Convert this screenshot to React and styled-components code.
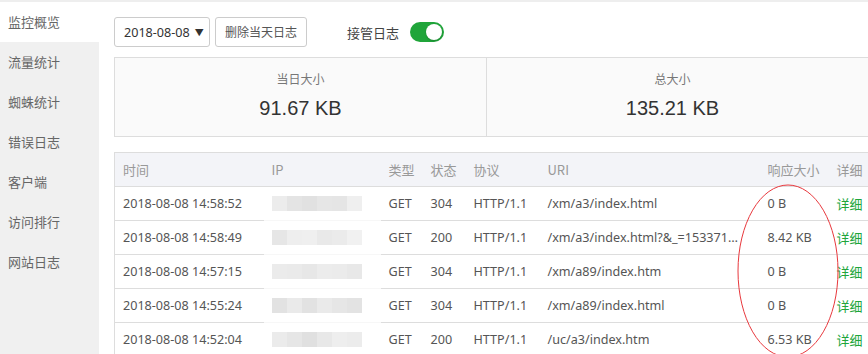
import React from 'react';
import styled, { createGlobalStyle } from 'styled-components';

const GlobalStyle = createGlobalStyle`
  html, body {
    margin: 0;
    padding: 0;
    background: #fff;
    overflow: hidden;
  }
  body {
    font-family: "Noto Sans", "Noto Sans CJK SC", sans-serif;
    color: #333;
  }
`;

const Page = styled.div`
  position: relative;
  display: flex;
  width: 868px;
  height: 354px;
  border-top: 2px solid #eeeeee;
  box-sizing: border-box;
  overflow: hidden;
`;

const Sidebar = styled.ul`
  list-style: none;
  margin: 0;
  padding: 0;
  width: 99px;
  flex-shrink: 0;
  background: #f0f0f0;
`;

const NavItem = styled.li`
  height: 40px;
  line-height: 40px;
  padding-left: 8px;
  font-size: 13px;
  color: #666;
  background: ${p => (p.active ? '#fff' : 'transparent')};
  font-family: "Noto Sans CJK SC", sans-serif;
`;

const Main = styled.div`
  flex: 1;
  min-width: 0;
  padding: 15px 0 0 15px;
`;

const Toolbar = styled.div`
  display: flex;
  align-items: center;
  height: 30px;
`;

const Select = styled.div`
  display: flex;
  align-items: center;
  box-sizing: border-box;
  width: 96px;
  height: 30px;
  padding: 0 0 0 9px;
  border: 1px solid #ccc;
  border-radius: 3px;
  font-size: 12.6px;
  color: #333;
  gap: 5px;

  span {
    font-size: 9px;
  }
`;

const Button = styled.div`
  box-sizing: border-box;
  height: 30px;
  margin-left: 5px;
  padding: 0 9px;
  line-height: 28px;
  border: 1px solid #ccc;
  border-radius: 3px;
  font-size: 12px;
  color: #555;
  font-family: "Noto Sans CJK SC", sans-serif;
`;

const SwitchLabel = styled.span`
  margin-left: 40px;
  font-size: 13px;
  color: #444;
  font-family: "Noto Sans CJK SC", sans-serif;
`;

const Switch = styled.div`
  position: relative;
  width: 34px;
  height: 20px;
  margin-left: 11px;
  border-radius: 10px;
  background: ${p => (p.on ? '#20a53a' : '#ccc')};

  &::after {
    content: '';
    position: absolute;
    top: 2px;
    left: ${p => (p.on ? '16px' : '2px')};
    width: 16px;
    height: 16px;
    border-radius: 50%;
    background: #fff;
    box-shadow: 0 1px 2px rgba(0, 0, 0, 0.2);
  }
`;

const Stats = styled.div`
  display: grid;
  grid-template-columns: 371px 1fr;
  margin-top: 10px;
  height: 80px;
  box-sizing: border-box;
  border: 1px solid #ddd;
  border-right: none;
  background: #fafafa;
`;

const StatCell = styled.div`
  display: flex;
  flex-direction: column;
  align-items: center;
  padding-top: 13px;
  padding-right: ${p => p.shift || 0}px;
  border-left: ${p => (p.divided ? '1px solid #ddd' : 'none')};
`;

const StatLabel = styled.div`
  font-size: 12px;
  color: #777;
  font-family: "Noto Sans CJK SC", sans-serif;
  line-height: 16px;
`;

const StatValue = styled.div`
  margin-top: 9px;
  font-size: 20px;
  color: #333;
  font-family: "Liberation Sans", Arial, sans-serif;
  line-height: 24px;
`;

const Table = styled.table`
  margin-top: 15px;
  width: 780px;
  border-collapse: collapse;
  table-layout: fixed;
  border-left: 1px solid #ddd;
  font-size: 12.6px;
`;

const Th = styled.th`
  height: 33px;
  padding: 0 8px;
  text-align: left;
  font-weight: normal;
  font-size: 13px;
  color: #999;
  background: #f3f4f8;
  border-top: 1px solid #ddd;
  border-bottom: 1px solid #ddd;
  font-family: "Noto Sans CJK SC", sans-serif;
  white-space: nowrap;
`;

const Td = styled.td`
  height: 33px;
  padding: 0 ${p => (p.tight ? 18 : 8)}px 0 8px;
  color: ${p => (p.link ? '#20a53a' : '#555')};
  border-bottom: 1px solid ${p => (p.masked ? '#f7f7f7' : '#ddd')};
  white-space: nowrap;
  overflow: hidden;
  text-overflow: ellipsis;
  font-family: ${p => (p.link ? '"Noto Sans CJK SC", sans-serif' : '"Noto Sans", sans-serif')};
  font-size: ${p => (p.link ? '13px' : 'inherit')};
`;

const Mosaic = styled.div`
  display: flex;
  width: 90px;
  height: 15px;
`;

const Tile = styled.div`
  flex: 1;
  background: ${p => p.shade};
`;

const Circle = styled.svg`
  position: absolute;
  left: 0;
  top: 0;
  pointer-events: none;
`;

const navItems = ['监控概览', '流量统计', '蜘蛛统计', '错误日志', '客户端', '访问排行', '网站日志'];

const rows = [
  { time: '2018-08-08 14:58:52', code: '304', uri: '/xm/a3/index.html', size: '0 B',
    tiles: ['#ececec', '#e4e4e4', '#e1e1e1', '#e6e6e6', '#e5e5e5', '#efefef'] },
  { time: '2018-08-08 14:58:49', code: '200', uri: '/xm/a3/index.html?&_=1533713620123', size: '8.42 KB',
    tiles: ['#e6e6e6', '#eeeeee', '#efefef', '#e9e9e9', '#ebebeb', '#f1f1f1'] },
  { time: '2018-08-08 14:57:15', code: '304', uri: '/xm/a89/index.htm', size: '0 B',
    tiles: ['#ebebeb', '#eaeaea', '#e7e7e7', '#ececec', '#ebebeb', '#e8e8e8'] },
  { time: '2018-08-08 14:55:24', code: '304', uri: '/xm/a89/index.html', size: '0 B',
    tiles: ['#e2e2e2', '#eaeaea', '#e2e2e2', '#eaeaea', '#e6e6e6', '#e3e3e3'] },
  { time: '2018-08-08 14:52:04', code: '200', uri: '/uc/a3/index.htm', size: '6.53 KB',
    tiles: ['#ebebeb', '#e6e6e6', '#e0e0e0', '#e8e8e8', '#eeeeee', '#ececec'] },
];

const App = () => {
  return (
    <>
      <GlobalStyle />
      <Page>
        <Sidebar>
          {navItems.map((n, i) => (
            <NavItem key={n} active={i === 0}>{n}</NavItem>
          ))}
        </Sidebar>
        <Main>
          <Toolbar>
            <Select>2018-08-08 <span>▼</span></Select>
            <Button>删除当天日志</Button>
            <SwitchLabel>接管日志</SwitchLabel>
            <Switch on />
          </Toolbar>
          <Stats>
            <StatCell>
              <StatLabel>当日大小</StatLabel>
              <StatValue>91.67 KB</StatValue>
            </StatCell>
            <StatCell divided shift={10}>
              <StatLabel>总大小</StatLabel>
              <StatValue>135.21 KB</StatValue>
            </StatCell>
          </Stats>
          <Table>
            <colgroup>
              <col style={{ width: 149 }} />
              <col style={{ width: 117 }} />
              <col style={{ width: 42 }} />
              <col style={{ width: 43 }} />
              <col style={{ width: 74 }} />
              <col style={{ width: 220 }} />
              <col style={{ width: 69 }} />
              <col style={{ width: 66 }} />
            </colgroup>
            <thead>
              <tr>
                <Th>时间</Th>
                <Th>IP</Th>
                <Th>类型</Th>
                <Th>状态</Th>
                <Th>协议</Th>
                <Th>URI</Th>
                <Th>响应大小</Th>
                <Th>详细</Th>
              </tr>
            </thead>
            <tbody>
              {rows.map(r => (
                <tr key={r.time}>
                  <Td>{r.time}</Td>
                  <Td masked>
                    <Mosaic>
                      {r.tiles.map((t, i) => <Tile key={i} shade={t} />)}
                    </Mosaic>
                  </Td>
                  <Td>GET</Td>
                  <Td>{r.code}</Td>
                  <Td>HTTP/1.1</Td>
                  <Td tight>{r.uri}</Td>
                  <Td>{r.size}</Td>
                  <Td link>详细</Td>
                </tr>
              ))}
            </tbody>
          </Table>
        </Main>
        <Circle width="868" height="354">
          <ellipse cx="788" cy="269" rx="50" ry="86" fill="none" stroke="#e8383d" strokeWidth="1" />
        </Circle>
      </Page>
    </>
  );
};

export default App;
